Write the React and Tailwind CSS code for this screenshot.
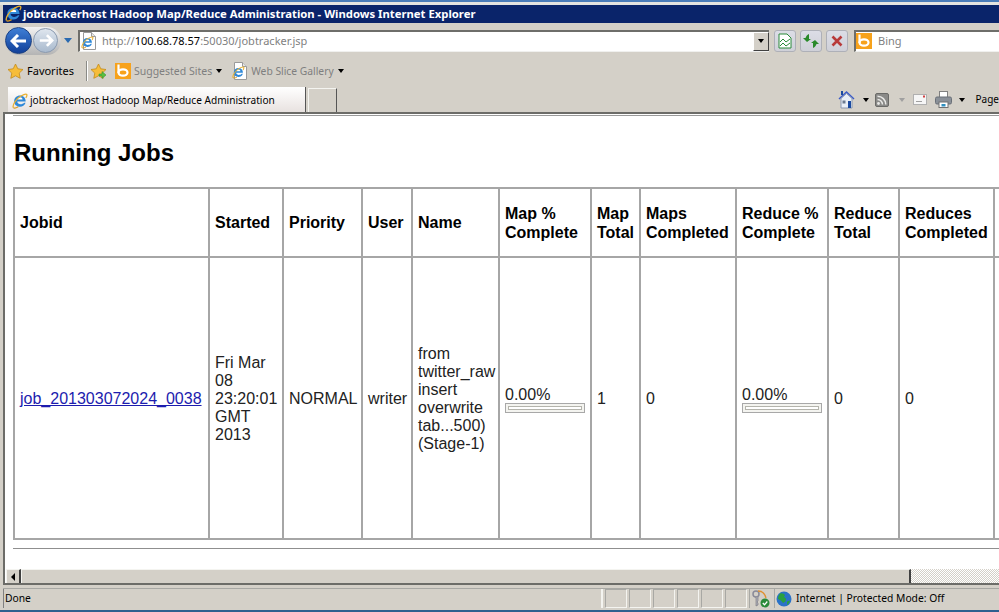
import React from "react";

const ui = { fontFamily: '"Noto Sans", Tahoma, sans-serif' };

function IEPaths() {
  return (
    <>
      <path d="M2.200 8.200c0-3.400 2.600-5.700 5.900-5.700 3.100 0 5.600 2.200 5.600 6H5.300c0 3 4.600 3.600 6.800 1.200h1.500c-1 2.600-3.200 4-5.600 4C4.600 13.700 2.200 11.400 2.200 8.200z" fill="#2f88d8" />
      <path d="M5.400 6.600h5.200c-.2-3-5-3-5.200 0z" fill="#fff" />
      <path d="M1.400 14.600C.2 12.600 3.400 6.200 9 3c2.500-1.400 5-2.300 5.700-1.500.5.600 0 2-.9 3.400" fill="none" stroke="#e8b030" strokeWidth="1.300" />
      <path d="M1.400 14.600c1 .9 3 .3 4.800-.8" fill="none" stroke="#d89a20" strokeWidth="1.200" />
    </>
  );
}

function IE({ s = 16 }) {
  return (
    <svg width={s} height={s} viewBox="0 0 16 16" className="block shrink-0">
      <IEPaths />
    </svg>
  );
}

function Doc() {
  return (
    <svg width="16" height="18" viewBox="0 0 16 18" className="block shrink-0">
      <path d="M2.500.5h8l4 4v13h-12z" fill="#fff" stroke="#9a9a9a" />
      <path d="M10.500.5v4h4" fill="#e4e4e4" stroke="#9a9a9a" />
      <g transform="translate(0 4) scale(.8)"><IEPaths /></g>
    </svg>
  );
}

function Bing({ s = 16 }) {
  return (
    <svg width={s} height={s} viewBox="0 0 16 16" className="block shrink-0">
      <rect width="16" height="16" fill="#f7a21b" />
      <path d="M3.500 1.500v8.500" stroke="#fff" strokeWidth="2.200" fill="none" />
      <ellipse cx="8" cy="9.500" rx="4.500" ry="3.200" fill="none" stroke="#fff" strokeWidth="2.200" />
    </svg>
  );
}

function Star({ children }) {
  return (
    <svg width="17" height="17" viewBox="0 0 17 17" className="block shrink-0">
      <path d="M8.500 1l2.300 4.800 5.200.7-3.800 3.600 1 5.200-4.700-2.500-4.700 2.500 1-5.200L1 6.500l5.200-.7z" fill="#f6bd3a" stroke="#c48a18" strokeWidth=".8" />
      {children}
    </svg>
  );
}

function Caret({ c = "#000" }) {
  return <span className="block w-0 h-0 shrink-0 border-x-[3.500px] border-x-transparent border-t-[4px]" style={{ borderTopColor: c }} />;
}

function CmdBtn({ children }) {
  return (
    <div className="w-[22px] h-[22px] shrink-0 rounded-[3px] border border-[#aeb0b8] bg-gradient-to-b from-[#dcdde6] to-[#cfd0d8] flex items-center justify-center">
      {children}
    </div>
  );
}

function Progress() {
  return (
    <div>
      <div className="text-[#222] leading-[18px]">0.00%</div>
      <div className="w-[80px] h-[10px] -mt-[1px] border border-[#a8a8a8] p-[2px] bg-[#f4f4f0]">
        <div className="h-full border border-[#b4b4ac] bg-white" />
      </div>
    </div>
  );
}

const th = "border-2 border-[#a6a6a6] pl-[5px] pr-[2px] text-left align-middle font-bold leading-[19px] text-black";
const td = "border-2 border-[#a6a6a6] pl-[5px] pr-[2px] pt-[2px] text-left align-middle font-normal leading-[18px] text-[#222]";

const widths = [195, 74, 79, 50, 87, 92, 49, 96, 92, 71, 95, 106];

function Table() {
  return (
    <table className="table-fixed border-collapse w-[1086px] text-[16px] mt-[20px] ml-[8px]">
      <colgroup>
        {widths.map((w, i) => (
          <col key={i} style={{ width: w }} />
        ))}
      </colgroup>
      <thead>
        <tr className="h-[69px]">
          <th className={th}>Jobid</th>
          <th className={th}>Started</th>
          <th className={th}>Priority</th>
          <th className={th}>User</th>
          <th className={th}>Name</th>
          <th className={th}>Map %<br />Complete</th>
          <th className={th}>Map<br />Total</th>
          <th className={th}>Maps<br />Completed</th>
          <th className={th}>Reduce %<br />Complete</th>
          <th className={th}>Reduce<br />Total</th>
          <th className={th}>Reduces<br />Completed</th>
          <th className={th}></th>
        </tr>
      </thead>
      <tbody>
        <tr className="h-[282px]">
          <td className={td}><a className="text-[#1c1cae] underline">job_201303072024_0038</a></td>
          <td className={td}>Fri Mar<br />08<br />23:20:01<br />GMT<br />2013</td>
          <td className={td}>NORMAL</td>
          <td className={td}>writer</td>
          <td className={td}>from<br />twitter_raw<br />insert<br />overwrite<br />tab...500)<br />(Stage-1)</td>
          <td className={td}><Progress /></td>
          <td className={td}>1</td>
          <td className={td}>0</td>
          <td className={td}><Progress /></td>
          <td className={td}>0</td>
          <td className={td}>0</td>
          <td className={td}></td>
        </tr>
      </tbody>
    </table>
  );
}

export default function App() {
  return (
    <div className="w-[999px] h-[612px] overflow-hidden bg-[#d4d0c8] flex flex-col text-black" style={ui}>
      {/* window edge */}
      <div className="h-[5px] shrink-0 border-t-[2px] border-[#4a7cb8] bg-[#e4e4e0]" />

      {/* title bar */}
      <div className="h-[18px] shrink-0 ml-[3px] bg-[#0a246a] flex items-center text-white font-bold text-[11.300px] whitespace-nowrap">
        <span className="ml-[2px] mr-[1px] -mb-[1px] -mt-[2px]"><IE s={17} /></span>
        <span>jobtrackerhost Hadoop Map/Reduce Administration - Windows Internet Explorer</span>
      </div>

      {/* address row */}
      <div className="h-[21px] mt-[7px] shrink-0 flex items-center">
        <div className="ml-[5px] w-[56px] h-[28px] shrink-0 rounded-full bg-gradient-to-b from-[#f2f2f2] to-[#b4b4b4] flex items-center relative">
          <div className="w-[27px] h-[27px] rounded-full border border-[#1a3f80] bg-gradient-to-b from-[#3f7fd6] to-[#12409a] flex items-center justify-center">
            <svg width="18" height="14" viewBox="0 0 18 14"><path d="M8 1L2 7l6 6M2 7h14" fill="none" stroke="#fff" strokeWidth="3" /></svg>
          </div>
          <div className="w-[25px] h-[25px] ml-[1px] rounded-full border border-[#8a9ab0] bg-gradient-to-b from-[#dfe6ee] to-[#a9bace] flex items-center justify-center">
            <svg width="16" height="13" viewBox="0 0 18 14"><path d="M10 1l6 6-6 6M16 7H2" fill="none" stroke="#fff" strokeWidth="3" /></svg>
          </div>
        </div>
        <span className="ml-[3px] block w-0 h-0 border-x-[4.500px] border-x-transparent border-t-[5px] border-t-[#2a6ab0]" />
        <div className="ml-[6px] w-[691px] h-[22px] shrink-0 bg-white border-t-2 border-l-2 border-[#6e6e6a] border-b border-b-[#f0f0ee] flex items-center">
          <span className="ml-[1px] mr-[5px]"><Doc /></span>
          <span className="text-[11px] text-[#7f7f7f]">http://<span className="text-black">100.68.78.57</span>:50030/jobtracker.jsp</span>
          <div className="ml-auto w-[16px] h-[19px] bg-[#d4d0c8] border border-t-white border-l-white border-r-[#404040] border-b-[#404040] flex items-center justify-center">
            <Caret />
          </div>
        </div>
        <div className="ml-[5px]"><CmdBtn>
          <svg width="14" height="16" viewBox="0 0 14 16"><path d="M1 1h8l4 4v10H1z" fill="#fff" stroke="#2a8a3a" /><path d="M2 9l3-3 3 3 4-3M2 13l3-3 3 3 4-3" fill="none" stroke="#2a8a3a" /></svg>
        </CmdBtn></div>
        <div className="ml-[4px]"><CmdBtn>
          <svg width="16" height="14" viewBox="0 0 16 14"><path d="M6 0v5H8L4 8 0 4h2.500c.4-1.500 1.500-3 3.500-4z" fill="#2a8a2a" /><path d="M10 14V9H8l4-3 4 4h-2.500c-.4 1.500-1.500 3-3.500 4z" fill="#2a8a2a" /></svg>
        </CmdBtn></div>
        <div className="ml-[4px]"><CmdBtn>
          <svg width="12" height="12" viewBox="0 0 12 12"><path d="M1.500 1.500l9 9M10.500 1.500l-9 9" stroke="#b83a3a" strokeWidth="2.600" /></svg>
        </CmdBtn></div>
        <div className="ml-[6px] flex-1 h-[22px] bg-white border-t-2 border-l-2 border-[#6e6e6a] border-b border-b-[#f0f0ee] flex items-center">
          <Bing s={16} />
          <span className="ml-[6px] text-[11px] text-[#7f7f7f]">Bing</span>
        </div>
      </div>

      {/* favorites row */}
      <div className="h-[24px] mt-[8px] shrink-0 flex items-center text-[11px] whitespace-nowrap">
        <span className="ml-[7px]"><Star /></span>
        <span className="ml-[3px]">Favorites</span>
        <span className="ml-[12px] block w-[1px] h-[20px] bg-[#8a8a86] border-r border-white box-content" />
        <span className="ml-[2px]">
          <Star><path d="M9 11h3V8.500l4 3.500-4 3.500V13H9z" fill="#5cc040" stroke="#2a8a2a" strokeWidth=".5" /></Star>
        </span>
        <span className="ml-[8px]"><Bing s={16} /></span>
        <span className="ml-[3px] pt-[1px] text-[#7f7f7f] text-[10.500px]">Suggested Sites</span>
        <span className="ml-[4px]"><Caret /></span>
        <span className="ml-[10px]"><Doc /></span>
        <span className="ml-[3px] pt-[1px] text-[#7f7f7f] text-[10.300px]">Web Slice Gallery</span>
        <span className="ml-[4px]"><Caret /></span>
      </div>

      {/* tab row */}
      <div className="h-[25px] mt-[4px] shrink-0 flex items-end text-[11px] whitespace-nowrap">
        <div className="ml-[8px] w-[298px] h-[25px] pt-[2px] shrink-0 bg-gradient-to-b from-white to-[#e8e2e0] border-r border-[#555] flex items-center text-[10.100px]">
          <span className="ml-[4px] mr-[2px]"><IE s={16} /></span>
          <span>jobtrackerhost Hadoop Map/Reduce Administration</span>
        </div>
        <div className="ml-[2px] w-[29px] h-[24px] shrink-0 border-t border-l border-[#f4f4f0] border-r border-r-[#555]" />
        <div className="ml-auto h-[25px] flex items-center">
          <svg width="19" height="19" viewBox="0 0 19 19" className="block shrink-0">
            <path d="M2 9l7.500-7L17 9" fill="none" stroke="#3a5ac8" strokeWidth="1.500" />
            <path d="M4 8.500l5.500-5 5.500 5V18H4z" fill="#e8eef6" stroke="#8a98b0" />
            <rect x="11" y="11" width="3" height="7" fill="#1a4aa0" />
            <rect x="5.500" y="10.500" width="3" height="3" fill="#6a7a90" />
            <rect x="4" y="1" width="2" height="4" fill="#1a4aa0" />
          </svg>
          <span className="ml-[7px]"><Caret /></span>
          <svg width="14" height="14" viewBox="0 0 14 14" className="block ml-[6px] shrink-0">
            <rect x=".5" y=".5" width="13" height="13" rx="1.500" fill="#8a8a88" stroke="#6a6a68" />
            <circle cx="3.500" cy="10.500" r="1.400" fill="#e8e8e6" />
            <path d="M2.500 6.500a5 5 0 0 1 5 5M2.500 3.200a8.300 8.300 0 0 1 8.300 8.300" fill="none" stroke="#e8e8e6" strokeWidth="1.500" />
          </svg>
          <span className="ml-[10px]"><Caret c="#a0a0a0" /></span>
          <svg width="14" height="11" viewBox="0 0 14 11" className="block ml-[8px] shrink-0">
            <rect x=".5" y=".5" width="13" height="10" fill="#f6f6f6" stroke="#b0b0b0" />
            <rect x="3" y="7" width="6" height="1" fill="#a0a0a0" />
            <rect x="10" y="1.500" width="2" height="2" fill="#d04040" />
          </svg>
          <svg width="17" height="17" viewBox="0 0 17 17" className="block ml-[8px] shrink-0">
            <rect x="4.500" y=".5" width="8" height="6" fill="#fff" stroke="#808080" />
            <rect x=".5" y="6" width="16" height="7" rx="1.500" fill="#8a9098" stroke="#6a7078" />
            <rect x="4" y="11" width="9" height="5.500" fill="#fff" stroke="#707070" />
            <rect x="6.500" y="13" width="4" height="2.500" fill="#3090c0" />
          </svg>
          <span className="ml-[7px]"><Caret /></span>
          <span className="ml-[11px] mr-[0px] text-[10px]">Page</span>
        </div>
      </div>

      {/* page viewport */}
      <div className="flex-1 min-h-0 ml-[3px] border-l-2 border-t-2 border-[#6c6c68] bg-white overflow-hidden" style={{ fontFamily: '"Liberation Sans", Arial, sans-serif' }}>
        <div className="h-[1px] mt-[1px] ml-[8px] bg-[#9a9a9a]" />
        <h1 className="ml-[9px] mt-[23px] text-[24px] font-bold leading-[28px] text-black">Running Jobs</h1>
        <Table />
        <div className="h-[1px] mt-[8px] ml-[8px] bg-[#8f8f8f]" />
      </div>

      {/* scrollbar */}
      <div className="h-[16px] shrink-0 ml-[3px] pl-[1px] border-l-2 border-[#6c6c68] bg-white flex border-b-2 box-border">
        <div className="w-[15px] h-[14px] bg-[#d4d0c8] border-t border-l border-t-[#f4f4f0] border-l-[#f4f4f0] border-r-2 border-r-[#404040] flex items-center justify-center">
          <span className="block w-0 h-0 border-y-[4px] border-y-transparent border-r-[4px] border-r-black" />
        </div>
        <div className="w-[890px] h-[14px] bg-[#d4d0c8] border-t border-l border-t-[#f4f4f0] border-l-[#f4f4f0] border-r-2 border-r-[#404040]" />
        <div className="flex-1 h-[14px] bg-[repeating-conic-gradient(#d4d0c8_0_25%,#fff_0_50%)] bg-[length:2px_2px]" />
      </div>

      {/* status bar */}
      <div className="h-[20px] mt-[3px] shrink-0 ml-[3px] flex items-stretch text-[10.300px] whitespace-nowrap border-t border-[#a8a8a4]">
        <div className="w-[600px] pl-[1px] border-l border-[#808080] border-r-2 border-r-[#f4f4f0] flex items-center">Done</div>
        {[0, 1, 2, 3, 4, 5].map((i) => (
          <div key={i} className="w-[22px] ml-[2px] border border-[#a8a8a4] border-r-[#f4f4f0] border-b-[#f4f4f0]" />
        ))}
        <div className="w-[22px] ml-[2px] border-l border-[#a8a8a4] flex items-center justify-center">
          <svg width="20" height="18" viewBox="0 0 20 18" className="block">
            <circle cx="5" cy="4" r="3" fill="none" stroke="#8a8a98" strokeWidth="1.500" />
            <path d="M5 7v9l2-1v-2l-1-1 1-1V7" fill="#b0b0b8" stroke="#70707a" strokeWidth=".6" />
            <path d="M7 1c4 0 7 3 8 7" fill="none" stroke="#e09030" strokeWidth="1.300" />
            <circle cx="14" cy="13" r="4.500" fill="#2a8a3a" />
            <path d="M11.800 13l1.700 1.800 2.800-3.300" fill="none" stroke="#fff" strokeWidth="1.300" />
          </svg>
        </div>
        <div className="flex-1 ml-[3px] border-l border-[#a8a8a4] flex items-center">
          <svg width="16" height="16" viewBox="0 0 16 16" className="block ml-[1px] shrink-0">
            <circle cx="8" cy="8" r="7.500" fill="#2a72c8" />
            <path d="M4 2.500c2-.8 4 .2 5 1.500l-1 2 2 1.500-.5 3L7 12 5 9.500 2 8c0-2 .8-4.200 2-5.500z" fill="#2aa040" />
            <path d="M11 10.500l3-1c-.2 2-1.400 3.500-3 4.400z" fill="#2aa040" />
          </svg>
          <span className="ml-[4px]">Internet | Protected Mode: Off</span>
        </div>
      </div>
      <div className="h-[2px] mt-[2px] shrink-0 bg-[#2f5f8f]" />
    </div>
  );
}
